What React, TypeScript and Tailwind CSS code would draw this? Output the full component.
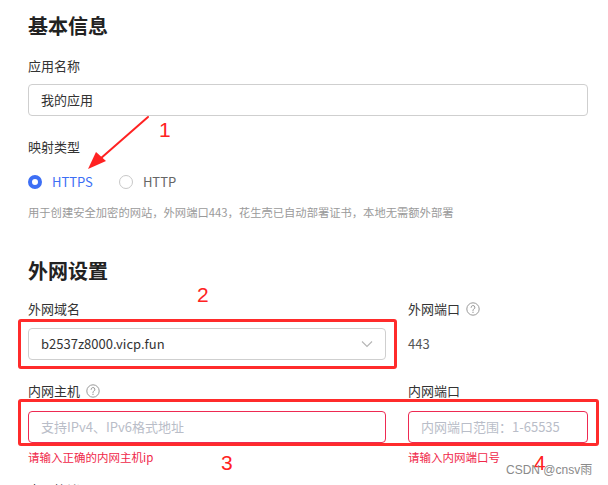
const font = { fontFamily: '"Noto Sans CJK SC", "Noto Sans", sans-serif' };

const Help = () => (
	<svg width="14" height="14" viewBox="0 0 14 14" className="ml-[6px] text-[#999]">
		<circle cx="7" cy="7" r="6.2" fill="none" stroke="currentColor" strokeWidth="1" />
		<path d="M5.1 5.4a1.9 1.9 0 1 1 2.6 1.8c-.5.2-.7.5-.7 1v.6" fill="none" stroke="currentColor" strokeWidth="1" strokeLinecap="round" />
		<circle cx="7" cy="10.4" r="0.6" fill="currentColor" />
	</svg>
);

const Label = ({ children, help }: { children: React.ReactNode; help?: boolean }) => (
	<div className="flex items-center h-5 text-[13px] leading-5 text-[#333]">
		{children}
		{help && <Help />}
	</div>
);

const Radio = ({ checked, label }: { checked?: boolean; label: string }) => (
	<div className="flex items-center gap-[10px]">
		<span
			className={`w-[14px] h-[14px] rounded-full ${
				checked ? 'border-[4px] border-[#3d6ff5] bg-white' : 'border border-[#c8c8c8] bg-white'
			}`}
		></span>
		<span className={`text-[13px] leading-5 ${checked ? 'text-[#3d6ff5]' : 'text-[#666]'}`}>{label}</span>
	</div>
);

export default function App() {
	return (
		<div className="relative w-[608px] h-[485px] overflow-hidden bg-white" style={font}>
			<div className="pl-[28px] pt-[12px] w-[588px]">
				<h2 className="text-[20px] leading-[28px] font-bold text-[#222]">基本信息</h2>

				<div className="mt-[16px]">
					<Label>应用名称</Label>
				</div>
				<div className="mt-[8px] h-[32px] border border-[#cfcfcf] rounded-[4px] flex items-center px-[12px] text-[13px] text-[#333]">
					我的应用
				</div>

				<div className="mt-[21px]">
					<Label>映射类型</Label>
				</div>
				<div className="mt-[15px] flex items-center gap-[26px] h-5">
					<Radio checked label="HTTPS" />
					<Radio label="HTTP" />
				</div>
				<p className="mt-[11px] text-[11.3px] leading-[18px] text-[#9a9a9a]">
					用于创建安全加密的网站，外网端口443，花生壳已自动部署证书，本地无需额外部署
				</p>

				<h2 className="mt-[36px] text-[20px] leading-[28px] font-bold text-[#222]">外网设置</h2>

				<div className="mt-[14px] grid grid-cols-[358px_180px] gap-x-[22px]">
					<div>
						<Label>外网域名</Label>
						<div className="mt-[9px] h-[32px] border border-[#cfcfcf] rounded-[4px] flex items-center justify-between pl-[12px] pr-[12px] text-[13px] text-[#333]">
							<span>b2537z8000.vicp.fun</span>
							<svg width="12" height="8" viewBox="0 0 12 8" className="text-[#b5b5b5]">
								<path d="M1 1.5l5 5 5-5" fill="none" stroke="currentColor" strokeWidth="1.1" />
							</svg>
						</div>
					</div>
					<div>
						<Label help>外网端口</Label>
						<div className="mt-[9px] h-[32px] flex items-center text-[13px] text-[#555]">443</div>
					</div>

					<div className="mt-[21px]">
						<Label help>内网主机</Label>
						<div className="mt-[10px] h-[32px] border border-[#ee2a52] rounded-[4px] flex items-center px-[12px] text-[13px] text-[#b9bdc8]">
							支持IPv4、IPv6格式地址
						</div>
						<div className="mt-[6px] text-[11.5px] leading-4 text-[#f0284a]">请输入正确的内网主机ip</div>
					</div>
					<div className="mt-[21px]">
						<Label>内网端口</Label>
						<div className="mt-[10px] h-[32px] border border-[#ee2a52] rounded-[4px] flex items-center px-[12px] text-[13px] text-[#b9bdc8]">
							内网端口范围：1-65535
						</div>
						<div className="mt-[6px] text-[11.5px] leading-4 text-[#f0284a]">请输入内网端口号</div>
					</div>
				</div>

				<div className="mt-[15px]">
					<Label>内网协议</Label>
				</div>
			</div>

			{/* annotations */}
			<svg className="absolute left-0 top-0 pointer-events-none" width="608" height="485">
				<line x1="148" y1="117" x2="100" y2="159" stroke="#f22" strokeWidth="2" strokeLinecap="round" />
				<polygon points="88,169 96,152 106,161" fill="#f22" />
			</svg>
			<div className="absolute left-[18px] top-[319px] w-[379px] h-[50px] border-[3px] border-[#ff2b2b] rounded-[3px]"></div>
			<div className="absolute left-[18px] top-[399px] w-[581px] h-[47px] border-[3px] border-[#ff2b2b] rounded-[3px]"></div>

			<span className="absolute left-[159px] top-[118px] text-[21px] leading-6 text-[#f22]" style={{ fontFamily: '"Liberation Sans", sans-serif' }}>1</span>
			<span className="absolute left-[197px] top-[283px] text-[21px] leading-6 text-[#f22]" style={{ fontFamily: '"Liberation Sans", sans-serif' }}>2</span>
			<span className="absolute left-[221px] top-[451px] text-[21px] leading-6 text-[#f22]" style={{ fontFamily: '"Liberation Sans", sans-serif' }}>3</span>
			<span className="absolute left-[534px] top-[451px] text-[21px] leading-6 text-[#f22]" style={{ fontFamily: '"Liberation Sans", sans-serif' }}>4</span>

			<span className="absolute left-[506px] top-[460px] text-[12px] leading-5 text-[#8a8a8a]" style={{ fontFamily: '"Liberation Sans", "Noto Sans CJK SC", sans-serif' }}>
				CSDN @cnsv雨
			</span>
		</div>
	);
}
